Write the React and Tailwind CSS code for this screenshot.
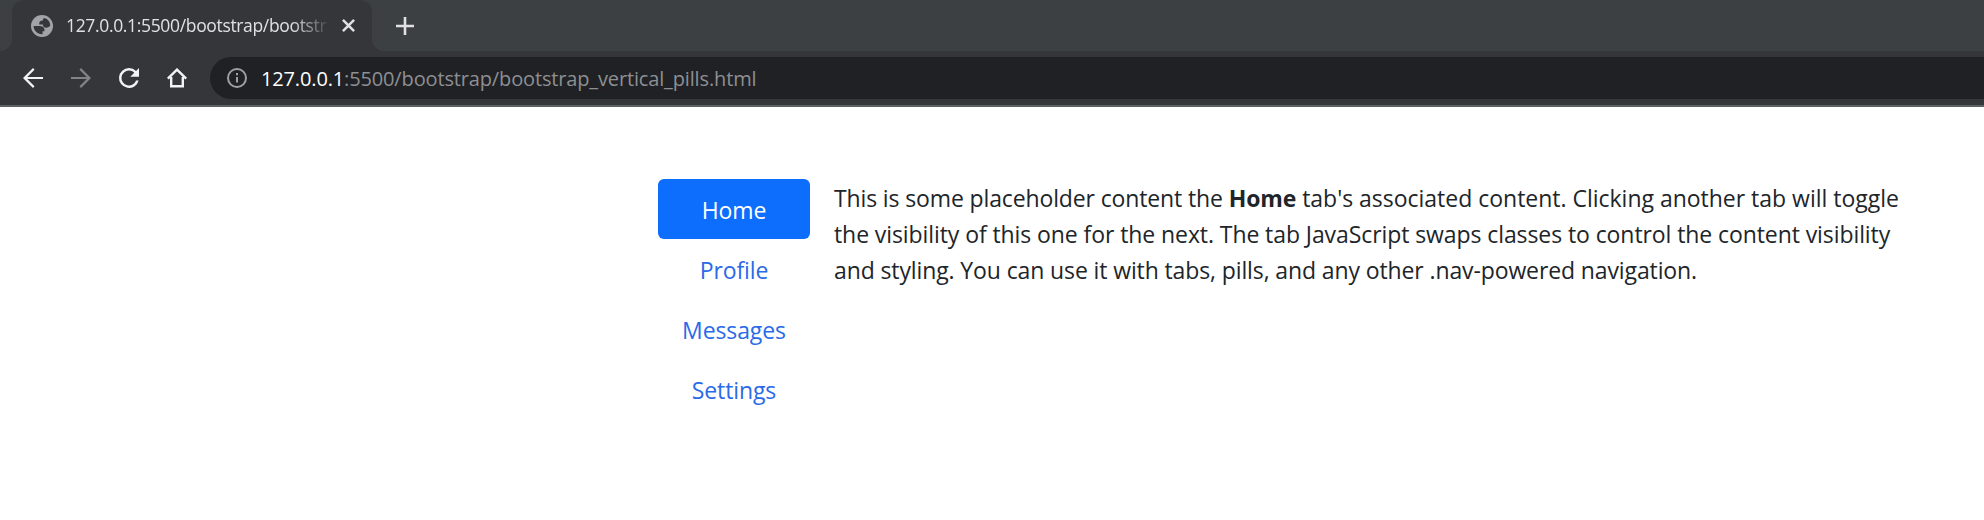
const NAV = ["Home", "Profile", "Messages", "Settings"];

function Favicon() {
  return (
    <svg viewBox="0 0 16 16" className="size-[22px] shrink-0">
      <circle cx="8" cy="8" r="8" className="fill-[#a0a4a9]" />
      <path
        className="fill-[#35363a]"
        d="M1.900 8H6.300C9 8.100 10.100 9.400 9.800 11.900H8.400V14C4.800 14.200 1.900 11.400 1.900 8ZM9.700 2.200C8.900 2.700 8.600 3.200 8.600 4C6.700 4 5.700 4.900 6 6.900H8.700C8.700 8.500 9.600 9.200 11.200 9.200C12.400 9.200 13.200 8.800 14 7.700C14 5 12.200 2.800 9.700 2.200Z"
      />
    </svg>
  );
}

function Glyph({ d, className }) {
  return (
    <svg viewBox="0 0 24 24" className={className}>
      <path d={d} />
    </svg>
  );
}

function TabStrip() {
  return (
    <div className="flex h-[51px] bg-[#3c4043]">
      <div className="w-3 bg-[#35363a]">
        <div className="h-full rounded-br-[12px] bg-[#3c4043]" />
      </div>
      <div className="flex w-[360px] items-center rounded-t-[12px] bg-[#35363a] pl-[19px]">
        <Favicon />
        <span className="ml-[13px] w-[262px] whitespace-nowrap text-[17.500px] tracking-[-0.340px] text-[#dfe1e5] [mask-image:linear-gradient(to_right,black_225px,transparent_266px)]">
          127.0.0.1:5500/bootstrap/bootstr
        </span>
        <svg viewBox="0 0 13 13" className="ml-[13.500px] size-[13px] shrink-0 stroke-[#dfe1e5] stroke-[2.500]">
          <path d="M.9.9 12.100 12.100M12.100.9.9 12.100" />
        </svg>
      </div>
      <div className="flex flex-1 bg-[#35363a]">
        <div className="flex h-full flex-1 items-center rounded-bl-[12px] bg-[#3c4043] pl-6">
          <svg viewBox="0 0 18 18" className="size-[18px] stroke-[#dfe1e5] stroke-[2.600]">
            <path d="M9 0V18M0 9H18" />
          </svg>
        </div>
      </div>
    </div>
  );
}

function Toolbar() {
  return (
    <div className="flex h-[56px] items-center border-b-2 border-[#5f6063] bg-[#35363a] pl-[18px]">
      <Glyph className="size-[30px] fill-[#f1f3f4]" d="M20 11.150H7.400l5.800-5.800L12 4l-8 8 8 8 1.200-1.350-5.800-5.800H20z" />
      <Glyph className="ml-[18px] size-[30px] fill-[#828387]" d="M4 11.150h12.600l-5.800-5.800L12 4l8 8-8 8-1.200-1.350 5.800-5.800H4z" />
      <Glyph className="ml-[18px] size-[30px] fill-[#f1f3f4]" d="M17.650 6.350A7.958 7.958 0 0 0 12 4a8 8 0 1 0 7.730 10h-2.080A6 6 0 1 1 12 6c1.660 0 3.140.69 4.220 1.780L13 11h7V4l-2.350 2.350z" />
      <svg viewBox="0 0 20 20" className="ml-[23px] size-5 fill-none stroke-[#f1f3f4] stroke-[2.400]">
        <path d="M.8 10.600 10 1.600l9.200 9M4.200 9v9.300h11.600V9" />
      </svg>
      <div className="ml-[23px] flex h-[42px] flex-1 items-center rounded-l-full bg-[#202124] pl-[17px]">
        <svg viewBox="0 0 20 20" className="size-5 fill-none stroke-[#9aa0a6] stroke-2">
          <circle cx="10" cy="10" r="9" />
          <path d="M10 9v5.500M10 5v2.200" />
        </svg>
        <span className="ml-[14px] whitespace-nowrap pt-[2px] text-[20px] tracking-[-0.145px] text-[#8d8f93]">
          <span className="text-white">127.0.0.1</span>:5500/bootstrap/bootstrap_vertical_pills.html
        </span>
      </div>
    </div>
  );
}

export default function App() {
  return (
    <div className="min-h-[520px] bg-white font-['Open_Sans',sans-serif]">
      <TabStrip />
      <Toolbar />
      <main className="flex pl-[658px] pt-[72px]">
        <nav className="flex w-[152px] flex-col text-[23px] tracking-[-0.100px]">
          {NAV.map((name, i) => (
            <button
              key={name}
              className={
                i === 0
                  ? "h-[60px] rounded-[6px] bg-[#0d6efd] pt-[2px] text-white"
                  : "h-[60px] pt-[2px] text-[#2a6ae9]"
              }
            >
              {name}
            </button>
          ))}
        </nav>
        <div className="ml-6 whitespace-nowrap pt-px text-[23px] leading-9 text-[#212529]">
          <p className="tracking-[-0.015px]">
            <span className="tracking-[-0.130px]">
              This is some placeholder content the <b>Home</b>
            </span>{" "}
            tab's associated content. Clicking another tab will toggle
          </p>
          <p className="tracking-[-0.085px]">
            the visibility of this one for the next. The tab JavaScript swaps classes to control the content visibility
          </p>
          <p className="tracking-[-0.115px]">
            and styling. You can use it with tabs, pills, and any other .nav-powered navigation.
          </p>
        </div>
      </main>
    </div>
  );
}
